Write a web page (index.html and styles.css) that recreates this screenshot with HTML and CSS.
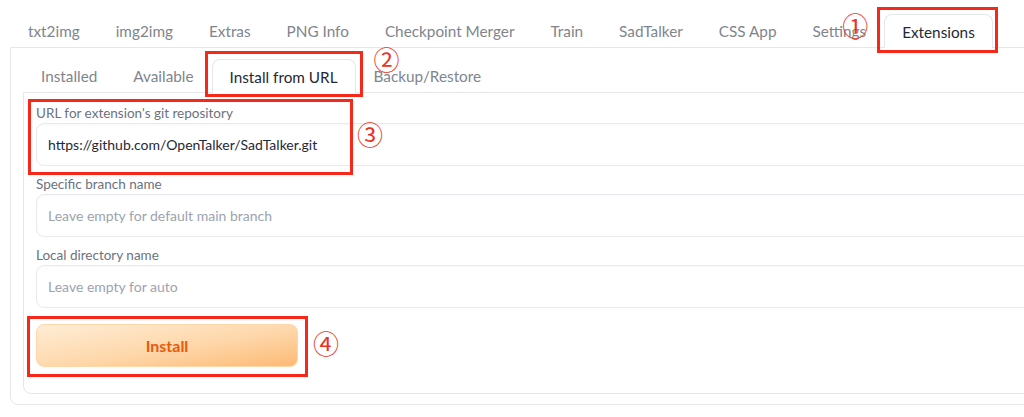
FILE: index.html
```html
<!DOCTYPE html>
<html lang="en">
<head>
<meta charset="utf-8">
<title>Extensions - Install from URL</title>
<link rel="stylesheet" href="styles.css">
</head>
<body>
<div class="app">
  <nav class="tabs">
    <button class="tab">txt2img</button>
    <button class="tab">img2img</button>
    <button class="tab">Extras</button>
    <button class="tab">PNG Info</button>
    <button class="tab">Checkpoint Merger</button>
    <button class="tab">Train</button>
    <button class="tab">SadTalker</button>
    <button class="tab">CSS App</button>
    <button class="tab">Settings</button>
    <button class="tab selected">Extensions<span class="mark mark-1">①</span><span class="redbox"></span></button>
  </nav>
  <section class="panel">
    <nav class="subtabs">
      <button class="subtab">Installed</button>
      <button class="subtab">Available</button>
      <button class="subtab selected">Install from URL<span class="mark mark-2">②</span><span class="redbox"></span></button>
      <button class="subtab">Backup/Restore</button>
    </nav>
    <div class="subpanel">
      <div class="field field-url">
        <label class="label">URL for extension's git repository</label>
        <div class="input">https://github.com/OpenTalker/SadTalker.git</div>
        <span class="redbox"></span>
        <span class="mark mark-3">③</span>
      </div>
      <div class="field">
        <label class="label">Specific branch name</label>
        <div class="input placeholder">Leave empty for default main branch</div>
      </div>
      <div class="field">
        <label class="label">Local directory name</label>
        <div class="input placeholder">Leave empty for auto</div>
      </div>
      <div class="action">
        <button class="install">Install<span class="redbox"></span><span class="mark mark-4">④</span></button>
      </div>
    </div>
  </section>
</div>
</body>
</html>
```

FILE: styles.css
```css
html, body {
  margin: 0;
  padding: 0;
  background: #ffffff;
  overflow: hidden;
}

body {
  font-family: Lato, "Noto Sans", "Liberation Sans", sans-serif;
  color: #374151;
}

.app {
  width: 1060px;
  padding: 14px 0 0 10px;
}

button {
  font-family: inherit;
  background: none;
  border: 0;
  margin: 0;
  cursor: pointer;
}

.tabs, .subtabs {
  display: flex;
  align-items: flex-end;
  position: relative;
  z-index: 1;
}

.tab, .subtab {
  position: relative;
  height: 33px;
  padding: 0 17px;
  font-size: 15.3px;
  color: #80858d;
  border: 1px solid transparent;
  border-bottom: 0;
  border-radius: 8px 8px 0 0;
  white-space: nowrap;
}

.tab.selected, .subtab.selected {
  color: #1f2937;
  background: #ffffff;
  border-color: #e5e7eb;
  height: 34px;
  margin-bottom: -1px;
}

.panel {
  border: 1px solid #e5e7eb;
  border-radius: 0 0 8px 8px;
  padding: 11px 0 10px 12px;
}

.subpanel {
  border: 1px solid #e5e7eb;
  border-radius: 0 0 8px 8px;
  padding: 10px 0 26px 12px;
  display: flex;
  flex-direction: column;
  gap: 8px;
}

.field {
  position: relative;
  display: flex;
  flex-direction: column;
}

.label {
  font-size: 13.5px;
  line-height: 20px;
  color: #6b7280;
}

.input {
  box-sizing: border-box;
  height: 43px;
  display: flex;
  align-items: center;
  padding: 0 11px;
  border: 1px solid #e8eaee;
  border-radius: 8px;
  font-size: 14px;
  color: #1f2937;
  box-shadow: inset 0 1px 2px rgba(0, 0, 0, 0.03);
}

.input.placeholder {
  color: #9ca3af;
}

.action {
  margin-top: 8px;
}

.install {
  position: relative;
  width: 262px;
  height: 43px;
  border: 1px solid #fed7aa;
  border-radius: 8px;
  background: linear-gradient(to bottom right, #ffedd5, #fed7aa 55%, #fdba74);
  color: #ea580c;
  font-size: 16px;
  font-weight: 700;
}

.redbox {
  position: absolute;
  border: 3px solid #f5281a;
  pointer-events: none;
}

.tab .redbox {
  left: -8px;
  right: -6px;
  top: -8px;
  bottom: -5px;
}

.subtab .redbox {
  left: -8px;
  right: -8px;
  top: -9px;
  bottom: -4px;
}

.field-url .redbox {
  left: -8px;
  top: -4px;
  width: 319px;
  height: 70px;
}

.install .redbox {
  left: -10px;
  right: -11px;
  top: -9px;
  bottom: -11px;
}

.mark {
  position: absolute;
  font-family: "Noto Sans CJK JP", "DejaVu Sans", sans-serif;
  font-size: 26px;
  line-height: 26px;
  color: #ea3323;
  font-weight: 400;
}

.mark-1 {
  left: -43px;
  top: -3px;
}

.mark-2 {
  left: 161px;
  top: -14px;
}

.mark-3 {
  left: 321px;
  top: 18px;
}

.mark-4 {
  left: 276px;
  top: 5px;
}
```
